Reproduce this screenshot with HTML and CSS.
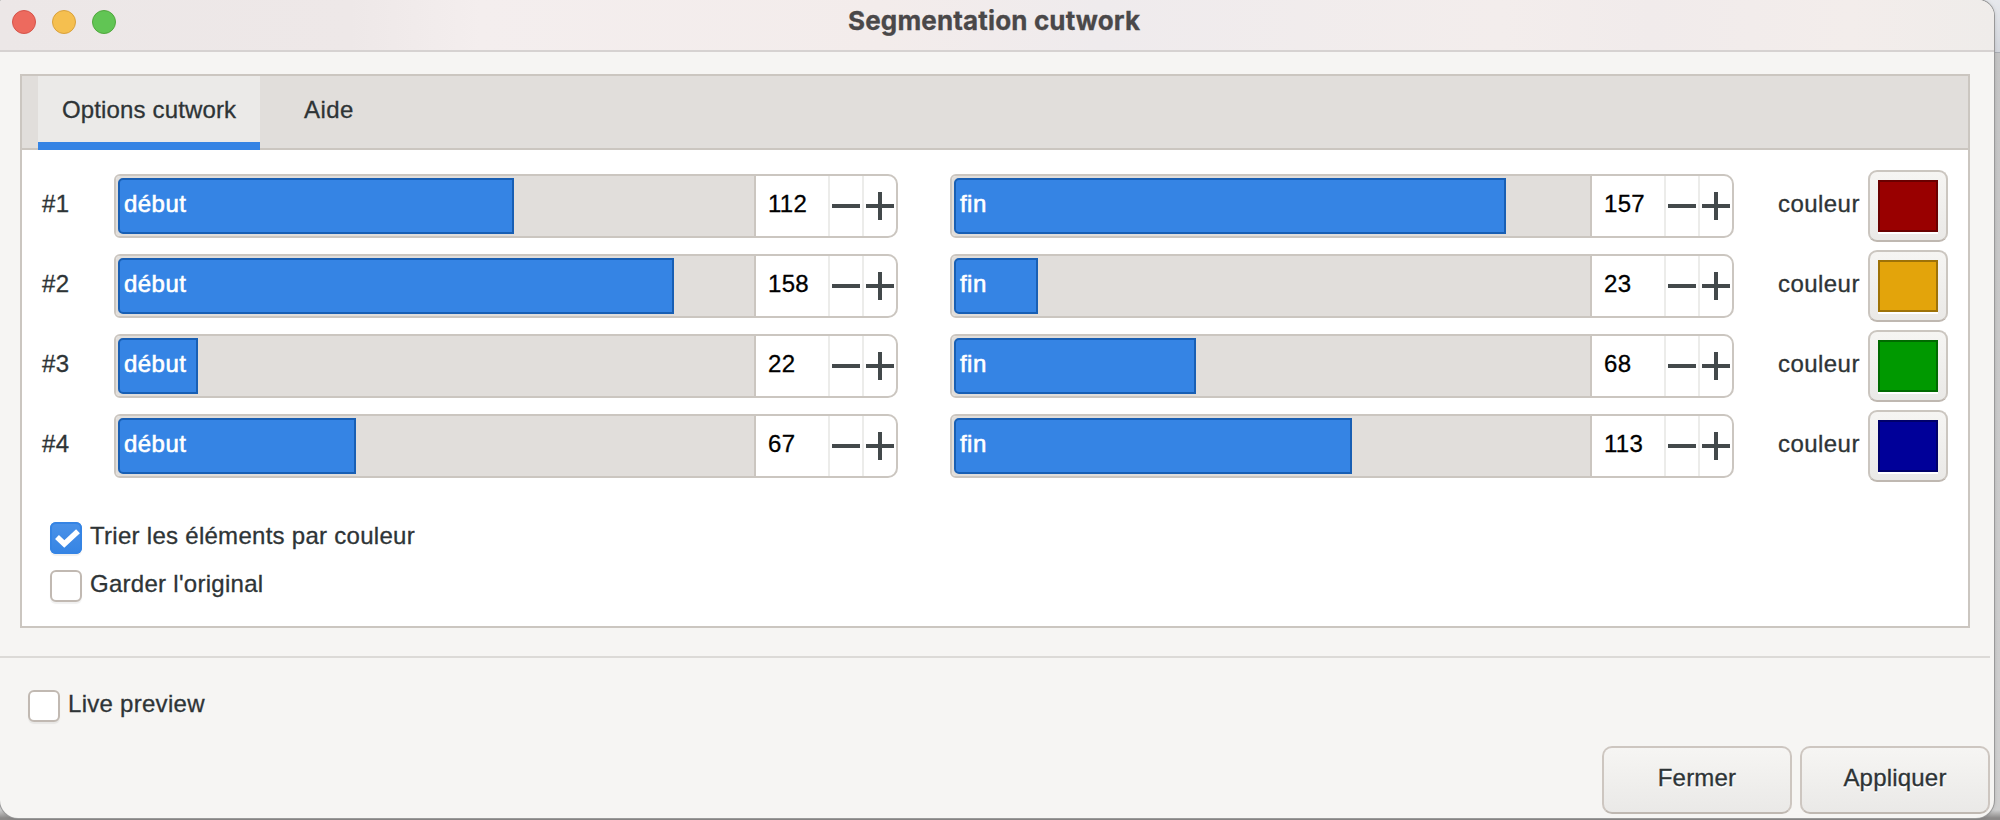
FILE: index.html
```
<!DOCTYPE html>
<html lang="fr">
<head>
<meta charset="utf-8">
<title>Segmentation cutwork</title>
<link rel="stylesheet" href="styles.css">
</head>
<body>
<div class="window">
  <header class="titlebar">
    <div class="lights"><i class="light close"></i><i class="light minimize"></i><i class="light zoom"></i></div>
    <h1 class="title">Segmentation cutwork</h1>
  </header>
  <main class="notebook">
    <nav class="tabs"><span class="tab active">Options cutwork</span><span class="tab">Aide</span></nav>
    <div class="rows" id="rows"></div>
    <div class="checks">
      <label class="check"><span class="box checked"><svg viewBox="0 0 32 32" width="32" height="32"><path d="M7 15 14.3 22 28 9.3" fill="none" stroke="#fff" stroke-width="5.6"/></svg></span><span>Trier les éléments par couleur</span></label>
      <label class="check"><span class="box"></span><span>Garder l'original</span></label>
    </div>
  </main>
  <div class="divider"></div>
  <footer class="footer">
    <label class="check"><span class="box"></span><span>Live preview</span></label>
    <div class="actions"><button class="btn">Fermer</button><button class="btn">Appliquer</button></div>
  </footer>
</div>
<script src="app.js"></script>
</body>
</html>
```
FILE: styles.css
```
* { box-sizing: border-box; }
body {
  margin: 0;
  width: 2000px;
  height: 820px;
  overflow: hidden;
  font-family: "Liberation Sans", Arial, sans-serif;
  font-size: 24px;
  line-height: 28px;
  letter-spacing: 0.45px;
  color: #2e3436;
  -webkit-text-stroke: .3px currentColor;
  background: linear-gradient(#e6e8ec 0, #d3d6dc 52px, #a9adb3 52px, #a9adb3 53px, #c4c4c4 53px, #cfcfcf 810px, #8c8a89 818px);
}
.window {
  width: 1994px;
  height: 818px;
  display: flex;
  flex-direction: column;
  background: #f6f5f3;
  border-radius: 2px 16px 18px 18px;
  box-shadow: 0 0 0 1px #999, 0 0 4px rgba(0, 0, 0, .2);
  overflow: hidden;
}
.titlebar {
  height: 52px;
  flex: none;
  display: grid;
  grid-template-columns: 848px 1fr;
  border-bottom: 2px solid #d6d2d1;
  background: linear-gradient(90deg, #ece7e7 0, #eee8e8 350px, #f4eeee 480px, #f3eceb 880px, #efebed 1100px, #f3edec 1500px, #f1ebeb 1650px, #f3edeb 1850px, #efecea 1994px);
}
.lights { display: flex; gap: 16px; padding: 10px 0 0 12px; }
.light { width: 24px; height: 24px; border-radius: 50%; border: 1px solid; }
.close { background: #ed6a5e; border-color: #d5544a; }
.minimize { background: #f5bf4f; border-color: #d9a13c; }
.zoom { background: #61c554; border-color: #51a73e; }
.title {
  margin: 0;
  padding-top: 4px;
  font: 700 26px/34px Inter, sans-serif;
  letter-spacing: .15px;
  color: #4a4849;
  white-space: nowrap;
}
.notebook {
  margin: 22px 24px 0 20px;
  height: 554px;
  flex: none;
  border: 2px solid #cbc6c0;
  background: #fff;
}
.tabs {
  display: flex;
  height: 74px;
  padding-left: 16px;
  background: #e1dedb;
  box-shadow: inset 0 -2px #cbc6c0;
}
.tab { padding: 20px 0 0 44px; }
.tab.active {
  width: 222px;
  padding-left: 24px;
  background: #ebeae8;
  border-bottom: 8px solid #3584e4;
  letter-spacing: .14px;
  white-space: nowrap;
}
.rows { padding: 20px 20px 0; display: grid; gap: 8px; }
.row {
  height: 72px;
  display: grid;
  grid-template-columns: 72px 784px 52px 784px 44px 90px 80px;
  align-items: center;
}
.num, .name { padding-bottom: 4px; }
.spin {
  height: 64px;
  display: flex;
  border: 2px solid #cbc6c0;
  border-radius: 6px 10px 10px 6px;
  background: #fff;
  overflow: hidden;
}
.track { width: 640px; flex: none; padding: 2px; background: #e1dedb; border-right: 2px solid #cbc6c0; }
.fill {
  height: 56px;
  padding: 10px 0 0 4px;
  border: 2px solid #185fb4;
  border-radius: 5px 0 0 5px;
  background: #3584e4;
  color: #fff;
  -webkit-text-stroke: .6px #fff;
}
.value { width: 72px; flex: none; padding: 14px 0 0 12px; color: #000; letter-spacing: .3px; }
.step { width: 34px; border-left: 2px solid #ececea; padding: 16px 0 0 2px; }
.step svg { display: block; }
.swatch {
  width: 80px;
  height: 72px;
  padding: 8px;
  border: 2px solid #cbc6c0;
  border-bottom-color: #bfb8b1;
  border-radius: 9px;
  background: linear-gradient(#f6f5f3, #eae9e7);
}
.chip { width: 60px; height: 52px; border: 2px solid rgba(0, 0, 0, .3); box-shadow: 0 2px #fff; }
.checks { padding: 40px 0 0 28px; display: grid; gap: 16px; }
.check { display: flex; gap: 8px; height: 32px; white-space: nowrap; letter-spacing: .28px; }
.box {
  width: 32px;
  height: 32px;
  flex: none;
  border: 2px solid #c1b9b2;
  border-radius: 6px;
  background: #fff;
  box-shadow: 0 2px 1px rgba(0, 0, 0, .06);
}
.box.checked { border: 0; background: linear-gradient(#4b92e8, #3584e4); box-shadow: inset 0 0 0 2px #3584e4, 0 2px 1px rgba(0, 0, 0, .06); }
.divider { flex: none; width: 1990px; height: 2px; margin-top: 28px; background: #dcdad7; }
.footer { padding: 32px 4px 0 28px; }
.actions { display: flex; justify-content: flex-end; gap: 8px; padding-top: 24px; }
.btn {
  width: 190px;
  height: 68px;
  padding: 0 0 4px;
  border: 2px solid #cdc6c0;
  border-bottom-color: #bfb8b1;
  border-radius: 10px;
  background: linear-gradient(#f6f5f3, #eae9e7);
  font: inherit;
  letter-spacing: .2px;
  color: #2e3436;
  text-shadow: 0 2px #fff;
}
```
FILE: app.js
```
const data = [
  [112, 396, 157, 552, '#990000'],
  [158, 556, 23, 84, '#e3a40b'],
  [22, 80, 68, 242, '#009900'],
  [67, 238, 113, 398, '#000099']
];
const minus = '<svg width="28" height="28"><path d="M0 14H28" stroke="#43494b" stroke-width="4"/></svg>';
const plus = '<svg width="28" height="28"><path d="M0 14H28M14 0V28" stroke="#43494b" stroke-width="4"/></svg>';
const spin = (label, value, width) =>
  `<div class="spin"><div class="track"><div class="fill" style="width:${width}px">${label}</div></div><div class="value">${value}</div><div class="step">${minus}</div><div class="step">${plus}</div></div>`;
document.getElementById('rows').innerHTML = data.map(([a, aw, b, bw, color], i) =>
  `<div class="row"><span class="num">#${i + 1}</span>${spin('début', a, aw)}<span></span>${spin('fin', b, bw)}<span></span><span class="name">couleur</span><div class="swatch"><div class="chip" style="background-color:${color}"></div></div></div>`
).join('');
```
